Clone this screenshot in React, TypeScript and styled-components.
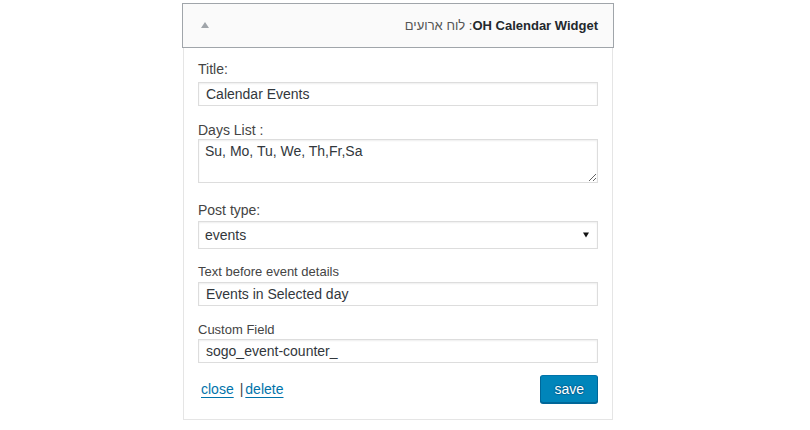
import React from "react";
import styled, { createGlobalStyle } from "styled-components";

const GlobalStyle = createGlobalStyle`
  html, body {
    margin: 0;
    padding: 0;
    background: #ffffff;
  }
  body {
    font-family: "Liberation Sans", Arial, sans-serif;
    color: #444;
  }
  * { box-sizing: border-box; }
`;

const Page = styled.div`
  padding: 3px 0 0 182px;
`;

const Widget = styled.div`
  width: 432px;
`;

const Header = styled.div`
  height: 45px;
  display: flex;
  align-items: center;
  justify-content: space-between;
  padding: 0 15px 0 18px;
  background: #fafafa;
  border: 1px solid #a0a5aa;
`;

const Arrow = styled.span`
  width: 0;
  height: 0;
  border-left: 4px solid transparent;
  border-right: 4px solid transparent;
  border-bottom: 6px solid #a0a5aa;
  margin-top: -1px;
`;

const HeaderTitle = styled.h3`
  margin: 0;
  font-size: 13px;
  line-height: 43px;
  font-weight: bold;
  color: #23282d;
  white-space: nowrap;
`;

const HeaderSub = styled.span`
  font-weight: normal;
  color: #555;
`;

const Body = styled.div`
  margin: 0 1px;
  border: 1px solid #e5e5e5;
  border-top: none;
  background: #fff;
  padding: 12px 14px 16px;
`;

const Field = styled.div<{ $top: number }>`
  margin-top: ${(p) => p.$top}px;
`;

const Label = styled.label<{ $size: number; $gap: number }>`
  display: block;
  font-size: ${(p) => p.$size}px;
  line-height: 18px;
  color: #444;
  margin-bottom: ${(p) => p.$gap}px;
`;

const TextInput = styled.input`
  display: block;
  width: 100%;
  height: 24px;
  margin: 0;
  padding: 0 7px;
  border: 1px solid #ddd;
  box-shadow: inset 0 1px 2px rgba(0, 0, 0, 0.07);
  background: #fff;
  color: #32373c;
  font-family: "Liberation Sans", Arial, sans-serif;
  font-size: 14px;
  outline: none;
`;

const TextArea = styled.textarea`
  display: block;
  width: 100%;
  height: 44px;
  margin: 0;
  padding: 3px 6px;
  border: 1px solid #ddd;
  box-shadow: inset 0 1px 2px rgba(0, 0, 0, 0.07);
  background: #fff;
  color: #32373c;
  font-family: "Liberation Sans", Arial, sans-serif;
  font-size: 14px;
  line-height: 16px;
  outline: none;
`;

const SelectWrap = styled.div`
  position: relative;
  &::after {
    content: "";
    position: absolute;
    right: 9px;
    top: 50%;
    transform: translateY(-50%);
    width: 0;
    height: 0;
    border-left: 3px solid transparent;
    border-right: 3px solid transparent;
    border-top: 5px solid #111;
    pointer-events: none;
  }
`;

const Select = styled.select`
  display: block;
  width: 100%;
  height: 28px;
  margin: 0;
  padding: 0 6px;
  border: 1px solid #ddd;
  border-radius: 0;
  box-shadow: inset 0 1px 2px rgba(0, 0, 0, 0.07);
  background: #fff;
  color: #32373c;
  font-family: "Liberation Sans", Arial, sans-serif;
  font-size: 14px;
  appearance: none;
  -webkit-appearance: none;
  outline: none;
`;

const Actions = styled.div`
  margin-top: 12px;
  display: flex;
  align-items: center;
  justify-content: space-between;
  padding-left: 3px;
`;

const LinkGroup = styled.div`
  font-size: 14px;
  line-height: 18px;
  color: #444;
  display: flex;
  align-items: center;
`;

const ActionLink = styled.a`
  color: #0073aa;
  text-decoration: underline;
  text-underline-offset: 3px;
  cursor: pointer;
`;

const Separator = styled.span`
  margin: 0 2px 0 6px;
`;

const SaveButton = styled.button`
  height: 28px;
  padding: 0 13px;
  border: 1px solid;
  border-color: #0073aa #006799 #006799;
  border-radius: 3px;
  background: #0085ba;
  box-shadow: 0 1px 0 #006799;
  color: #fff;
  font-family: "Liberation Sans", Arial, sans-serif;
  font-size: 14px;
  line-height: 26px;
  text-shadow: 0 -1px 1px #006799, 1px 0 1px #006799, 0 1px 1px #006799, -1px 0 1px #006799;
  cursor: pointer;
`;

export default function App() {
  return (
    <>
      <GlobalStyle />
      <Page>
        <Widget>
          <Header>
            <Arrow />
            <HeaderTitle dir="rtl">
              OH Calendar Widget<HeaderSub>: לוח ארועים</HeaderSub>
            </HeaderTitle>
          </Header>
          <Body>
            <Field $top={0}>
              <Label $size={14} $gap={4}>Title:</Label>
              <TextInput defaultValue="Calendar Events" />
            </Field>
            <Field $top={15}>
              <Label $size={14} $gap={0}>Days List :</Label>
              <TextArea defaultValue="Su, Mo, Tu, We, Th,Fr,Sa" />
            </Field>
            <Field $top={18}>
              <Label $size={14} $gap={2}>Post type:</Label>
              <SelectWrap>
                <Select defaultValue="events">
                  <option value="events">events</option>
                  <option value="post">post</option>
                  <option value="page">page</option>
                </Select>
              </SelectWrap>
            </Field>
            <Field $top={14}>
              <Label $size={13} $gap={1}>Text before event details</Label>
              <TextInput defaultValue="Events in Selected day" />
            </Field>
            <Field $top={15}>
              <Label $size={13} $gap={0}>Custom Field</Label>
              <TextInput defaultValue="sogo_event-counter_" />
            </Field>
            <Actions>
              <LinkGroup>
                <ActionLink>close</ActionLink>
                <Separator>|</Separator>
                <ActionLink>delete</ActionLink>
              </LinkGroup>
              <SaveButton>save</SaveButton>
            </Actions>
          </Body>
        </Widget>
      </Page>
    </>
  );
}
